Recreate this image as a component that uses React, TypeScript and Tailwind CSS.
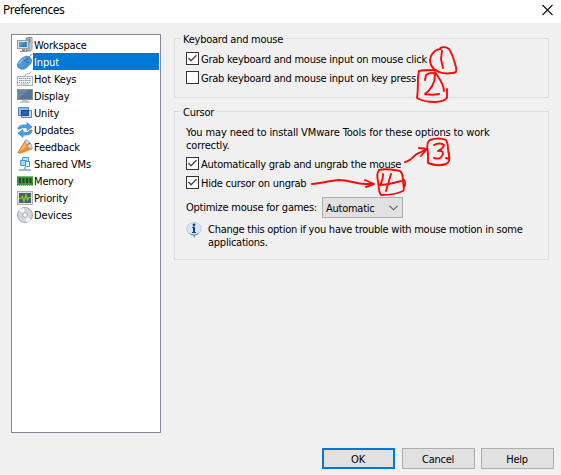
import React from "react";

type IconProps = { children: React.ReactNode };

function Icon({ children }: IconProps) {
  return (
    <svg width="16" height="16" viewBox="0 0 16 16" fill="none" className="shrink-0">
      {children}
    </svg>
  );
}

const WorkspaceIcon = () => (
  <Icon>
    <path d="M9 1.5 11 .5h4v12l-2 1.5H9z" fill="#a9adb0" stroke="#6f7579" strokeWidth=".8" />
    <path d="M11 3h3M11 5h3" stroke="#50565a" />
    <path d="M14 1v12" stroke="#d8dcde" />
    <rect x=".5" y="3.5" width="11" height="8" fill="#d5dadd" stroke="#9ba1a5" />
    <rect x="2" y="5" width="8" height="5" fill="#3b82c0" />
    <path d="M2 10V5h6z" fill="#5b9fd6" />
    <path d="M5 12h3v2h2v1H3v-1h2z" fill="#8b9195" />
  </Icon>
);

const MouseIcon = () => (
  <Icon>
    <path d="M12 4c0-2 1-3 3.500-3.500" stroke="#8d979e" />
    <path d="M.6 10C1.500 7 5.500 3 9 2.200c3-.5 6.300 2.300 5.500 5.300-1 3-5 7.300-8.500 7.800C3 15.500-.5 13 .6 10z" fill="#4b95d9" stroke="#2e6cab" strokeWidth=".6" />
    <path d="M2 10c2-3 4-5 6-6" stroke="#8bc0ed" strokeWidth="1.500" />
    <path d="M6.500 4.500c1 2.500 3 4 6 4.500M9 6.500l3-3" stroke="#23609e" strokeWidth=".8" />
  </Icon>
);

const KeyboardIcon = () => (
  <Icon>
    <path d="M8 6V4c0-1.500 5 0 6-3.500" stroke="#a2a9ae" />
    <rect x=".5" y="5.500" width="15" height="9" fill="#f1f3f5" stroke="#a9b4bd" />
    <path d="M2 7.500h12M2 9.500h12" stroke="#8a9db4" strokeDasharray="1.500 .5" />
    <path d="M2 11.500h12" stroke="#8a9db4" strokeDasharray="1 1" />
    <path d="M4 13h8" stroke="#b3bfca" />
  </Icon>
);

const DisplayIcon = () => (
  <Icon>
    <rect x=".5" y="1.500" width="15" height="10" fill="#547596" stroke="#8b9299" />
    <path d="M1 11V2h11z" fill="#6786a3" />
    <path d="M5 12h6v1.500h2V15H3v-1.500h2z" fill="#c1c5c8" />
  </Icon>
);

const UnityIcon = () => (
  <Icon>
    <path d="M1.500 2.500h10v8h-10z" fill="#8fc0eb" stroke="#4386c5" />
    <path d="M4.500 5.500h10v7h-10z" fill="#b9dcf7" stroke="#4b8ccc" />
    <path d="M4.500 5.500h7v5h-7z" fill="#2866a7" stroke="#174c86" />
  </Icon>
);

const UpdatesIcon = () => (
  <Icon>
    <path d="M1 7c0-3 3-4.500 9-4V.5L15 5l-5 3.500V6C7 5.500 4 5.500 3 7z" fill="#4b9ee9" stroke="#2d75bd" strokeWidth=".6" />
    <path d="M15 8c0 4-3 5.500-9 5v2.500L1 11l5-3.500V10c3 .5 6 .5 7-2z" fill="#4b9ee9" stroke="#2d75bd" strokeWidth=".6" />
  </Icon>
);

const FeedbackIcon = () => (
  <Icon>
    <path d="M8 2 .8 13.500l1.500 1L15 10z" fill="#f28b28" stroke="#c96d1d" strokeWidth=".6" />
    <path d="M8 3.500 2 13l7-5z" fill="#ffb15b" />
    <path d="M8 1c3-1 8 5 7 9-2 .5-8-5-7-9z" fill="#d4d5d6" stroke="#969ba0" strokeWidth=".8" />
    <path d="m10 6 3-2" stroke="#787e83" strokeWidth="1.500" />
  </Icon>
);

const SharedIcon = () => (
  <Icon>
    <path d="M5.500 1.500h6v6h-6z" fill="#cce7fb" stroke="#4795d6" />
    <path d="M3.500 4.500h6v5h-6z" fill="#a8d4f5" stroke="#4795d6" />
    <path d="M8.500 5.500h4v5h-4z" fill="#e8f5ff" stroke="#4795d6" />
    <path d="M8 11v3M2 14h12" stroke="#78a9cd" strokeWidth="1.500" />
  </Icon>
);

const MemoryIcon = () => (
  <Icon>
    <path d="M0 4h16v8H0z" fill="#349b40" />
    <path d="M0 3.500h16M0 12.500h16" stroke="#74bd70" />
    <path d="M2 5h2v5H2zM5.500 5h2v5h-2zM9 5h2v5H9zM12.500 5h2v5h-2z" fill="#303d35" />
    <path d="M1 12.500h14" stroke="#d5dc82" strokeDasharray="1 1" />
  </Icon>
);

const PriorityIcon = () => (
  <Icon>
    <rect x=".5" y="1.500" width="15" height="13" fill="#e1e4e5" stroke="#abb1b6" />
    <path d="M2 3h12v10H2z" fill="#4c6074" />
    <path d="M2 8.500h2l1.500-2 1.500 5L9 5l1.500 5L12 7.500h2" stroke="#83d51c" strokeWidth="1.200" />
  </Icon>
);

const DevicesIcon = () => (
  <Icon>
    <circle cx="8" cy="8" r="7.500" fill="#d3d6da" stroke="#a1a7ad" />
    <path d="M8 8 2 3.500C3 2 5 1 7 1zM8 8l6 5c-1 1.500-3 2-5 2z" fill="#f3f4f6" />
    <circle cx="8" cy="8" r="2.500" fill="#e8eaed" stroke="#a9b0b7" />
    <circle cx="8" cy="8" r="1" fill="#fff" />
  </Icon>
);

const pages = [
  { name: "Workspace", Glyph: WorkspaceIcon },
  { name: "Input", Glyph: MouseIcon },
  { name: "Hot Keys", Glyph: KeyboardIcon },
  { name: "Display", Glyph: DisplayIcon },
  { name: "Unity", Glyph: UnityIcon },
  { name: "Updates", Glyph: UpdatesIcon },
  { name: "Feedback", Glyph: FeedbackIcon },
  { name: "Shared VMs", Glyph: SharedIcon },
  { name: "Memory", Glyph: MemoryIcon },
  { name: "Priority", Glyph: PriorityIcon },
  { name: "Devices", Glyph: DevicesIcon },
];

function Sidebar() {
  return (
    <nav className="h-[399px] w-[150px] shrink-0 border border-[#828790] bg-white pt-px pr-px pl-[5px] tracking-[-0.15px]">
      {pages.map(({ name, Glyph }) => (
        <div key={name} className="flex h-[17px] items-center">
          <Glyph />
          <span className={`h-[17px] grow pl-px leading-[19px] ${name === "Input" ? "bg-[#0078d7] text-white" : ""}`}>{name}</span>
        </div>
      ))}
    </nav>
  );
}

function Check({ checked = false, children }: { checked?: boolean; children: React.ReactNode }) {
  return (
    <label className="flex h-[13px] items-center gap-[2px]">
      <span className="flex size-[13px] shrink-0 items-center justify-center border border-[#333] bg-white">
        {checked && (
          <svg width="11" height="11" viewBox="0 0 11 11" fill="none">
            <path d="m1.500 5 2.500 2.700L9.500 2.200" stroke="#444" strokeWidth="1.300" />
          </svg>
        )}
      </span>
      <span className="pt-[2px]">{children}</span>
    </label>
  );
}

function Group({ title, className, children }: { title: string; className: string; children: React.ReactNode }) {
  return (
    <section className={`relative w-[375px] border border-[#dcdcdc] pl-[11px] ${className}`}>
      <h2 className="absolute -top-[6px] left-[6px] bg-[#f0f0f0] px-[2px]">{title}</h2>
      {children}
    </section>
  );
}

function InfoIcon() {
  return (
    <svg width="16" height="16" viewBox="0 0 16 16" fill="none" className="shrink-0">
      <path d="M8 .5c4 0 7 2.500 7 6.200 0 3-2 5.300-5 6L8.500 15.500 7 13C3 12.500.8 10 .8 6.700.8 3 4 .5 8 .5z" fill="#d9e8f6" stroke="#aac2d8" strokeWidth=".8" />
      <path d="M3 11c3 2 7 2 10-.5-1 2-2 2.500-4 2.800l-.5 2-1.500-2C5 13 4 12.500 3 11z" fill="#648bb3" />
      <circle cx="8" cy="3" r="1.400" fill="#123f91" />
      <path d="M6 5h3v5h1v1H6v-1h1V6H6z" fill="#123f91" />
    </svg>
  );
}

function Annotations() {
  return (
    <svg className="pointer-events-none absolute inset-0" width="561" height="475" viewBox="0 0 561 475" fill="none" stroke="#fb0a08" strokeWidth="1.900" strokeLinecap="round" strokeLinejoin="round">
      <path d="M441 49c-4 0-8 3-10 7-2 5 0 10 3 13 5 4 12 5 18 4 4 0 5-1 4-6-2-7-3-12-7-18-3-3-9-2-9 0M442 51l-1 8 2 9" />
      <path d="M436 70c-6 0-13 0-17 1l-1 6c0 7 0 15-1 21 5 3 12 4 18 4 5 0 12-2 12-5v-8M434 70c3 6 10 13 10 21M425 80l1-5c4-3 9-3 9 1 0 6-4 14-10 18 5 1 9 1 14 0" />
      <path d="M405 162c7-1 9-8 14-9l8-4m-8-1 8 1-6 7" />
      <path d="M430 140c-4 2-3 8-2 13v10c5 2 12 3 18 1 4-2 4-5 3-9-2-6 0-11-3-15-4-2-11-2-16 0M434 145c3-2 8-2 10 0-1 4-4 5-6 6 5-1 6 2 4 5-2 3-4 3-8 2M449 153v6l-3-1" />
      <path d="M312 184c10-1 17-3 27-4 11 0 16 4 27 4h8m-9-4 9 4-8 3" />
      <path d="M379 170c-2 3-2 7-1 11 1 5 0 10 3 14 6 0 16-1 22-4 2-1 0-6 0-10-1-4 1-7-3-10-6-1-14-3-21-1M383 174c0 3-1 8-3 11 7 0 14-2 21-4M391 174l-5 17M403 179c3 2 3 4 1 8" />
    </svg>
  );
}

function DialogButton({ children, primary = false }: { children: React.ReactNode; primary?: boolean }) {
  return (
    <button className={`flex h-[21px] w-[73px] items-center justify-center bg-[#e1e1e1] pt-[2px] pr-px ${primary ? "mr-[7px] border-2 border-[#0078d7]" : "mr-[6px] border border-[#adadad]"}`}>{children}</button>
  );
}

export default function App() {
  return (
    <div className="relative h-[475px] w-[561px] overflow-hidden bg-[#f0f0f0] font-['DejaVu_Sans_Condensed','DejaVu_Sans',sans-serif] text-[11px] leading-[13px] tracking-[-0.25px] whitespace-nowrap text-black [font-stretch:condensed]">
      <header className="flex h-[23px] justify-between bg-white pt-[2px] pl-[3px] pr-[7px] font-['Noto_Sans',sans-serif] text-[12px] leading-4 tracking-[-0.5px] [font-stretch:normal]">
        <span>Preferences</span>
        <svg width="13" height="15" viewBox="0 0 13 15" fill="none" className="-mt-px">
          <path d="m1.500 4 10 10m0-10-10 10" stroke="#111" strokeWidth="1.100" />
        </svg>
      </header>
      <main className="flex h-[425px] gap-[13px] pt-[11px] pl-[11px]">
        <Sidebar />
        <div className="flex flex-col gap-[13px] pt-1">
          <Group title="Keyboard and mouse" className="h-[60px] pt-[13px]">
            <div className="flex flex-col gap-[6px]">
              <Check checked>Grab keyboard and mouse input on mouse click</Check>
              <Check>Grab keyboard and mouse input on key press</Check>
            </div>
          </Group>
          <Group title="Cursor" className="h-[149px] pt-[14px]">
            <p className="tracking-[-0.14px]">You may need to install VMware Tools for these options to work<br />correctly.</p>
            <div className="mt-[5px] flex flex-col gap-[6px]">
              <Check checked>Automatically grab and ungrab the mouse</Check>
              <Check checked>Hide cursor on ungrab</Check>
            </div>
            <div className="mt-2 flex items-center">
              <span className="w-[136px]">Optimize mouse for games:</span>
              <div className="flex h-[21px] w-[81px] items-center justify-between border border-[#adadad] bg-[#e1e1e1] pl-[3px] pr-1">
                <span className="pt-[2px]">Automatic</span>
                <svg width="9" height="6" viewBox="0 0 9 6" fill="none"><path d="m.5.8 4 4 4-4" stroke="#555" strokeWidth="1.100" /></svg>
              </div>
            </div>
            <div className="mt-[4px] flex gap-[6px]">
              <InfoIcon />
              <p className="pt-px">Change this option if you have trouble with mouse motion in some<br />applications.</p>
            </div>
          </Group>
        </div>
      </main>
      <footer className="flex pl-[322px]">
        <DialogButton primary>OK</DialogButton>
        <DialogButton>Cancel</DialogButton>
        <DialogButton>Help</DialogButton>
      </footer>
      <Annotations />
    </div>
  );
}
